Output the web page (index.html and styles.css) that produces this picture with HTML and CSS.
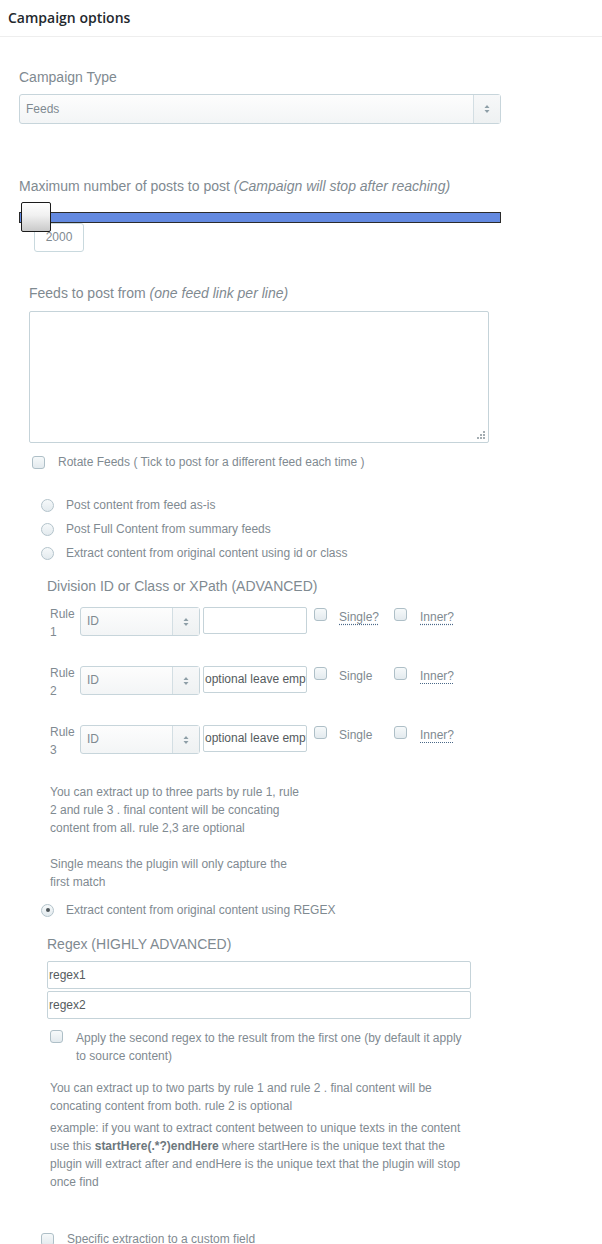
FILE: index.html
```html
<!DOCTYPE html>
<html>
<head>
<meta charset="utf-8">
<title>Campaign options</title>
<link rel="stylesheet" href="styles.css">
</head>
<body>
<div class="box">
  <h2 class="box-title">Campaign options</h2>
  <div class="box-body">
    <div class="field-label lbl-type">Campaign Type</div>
    <div class="select select-main">
      <span class="select-text">Feeds</span>
      <span class="select-arrow"><svg width="6" height="10" viewBox="0 0 6 10"><polygon points="0.5,4 3,1 5.5,4" fill="#8d9ea7"/><polygon points="0.5,6 5.5,6 3,9" fill="#8d9ea7"/></svg></span>
    </div>

    <div class="field-label lbl-max">Maximum number of posts to post <em>(Campaign will stop after reaching)</em></div>
    <div class="slider">
      <div class="slider-track"></div>
      <div class="slider-tip">2000</div>
      <div class="slider-handle"></div>
    </div>

    <div class="feeds">
      <div class="field-label">Feeds to post from <em>(one feed link per line)</em></div>
      <div class="textarea">
        <svg class="grip" width="9" height="9" viewBox="0 0 9 9"><rect x="6" y="0" width="2" height="2" fill="#a4adb2"/><rect x="3" y="3" width="2" height="2" fill="#a4adb2"/><rect x="6" y="3" width="2" height="2" fill="#a4adb2"/><rect x="0" y="6" width="2" height="2" fill="#a4adb2"/><rect x="3" y="6" width="2" height="2" fill="#a4adb2"/><rect x="6" y="6" width="2" height="2" fill="#a4adb2"/></svg>
      </div>
      <div class="check-row rotate"><span class="cb"></span><span>Rotate Feeds ( Tick to post for a different feed each time )</span></div>
    </div>

    <div class="radios radios-top">
      <div class="radio-row"><span class="rb"></span><span>Post content from feed as-is</span></div>
      <div class="radio-row"><span class="rb"></span><span>Post Full Content from summary feeds</span></div>
      <div class="radio-row"><span class="rb"></span><span>Extract content from original content using id or class</span></div>
    </div>

    <div class="advanced">
      <div class="field-label lbl-div">Division ID or Class or XPath (ADVANCED)</div>
      <div class="rules">
        <div class="rule-row">
          <span class="rule-label">Rule 1</span>
          <div class="select select-rule"><span class="select-text">ID</span><span class="select-arrow"><svg width="6" height="10" viewBox="0 0 6 10"><polygon points="0.5,4 3,1 5.5,4" fill="#8d9ea7"/><polygon points="0.5,6 5.5,6 3,9" fill="#8d9ea7"/></svg></span></div>
          <div class="input input-rule"></div>
          <span class="cb cb-rule"></span>
          <span class="opt-label"><span class="abbr">Single?</span></span>
          <span class="cb cb-rule cb-second"></span>
          <span class="opt-label opt-inner"><span class="abbr">Inner?</span></span>
        </div>
        <div class="rule-row">
          <span class="rule-label">Rule 2</span>
          <div class="select select-rule"><span class="select-text">ID</span><span class="select-arrow"><svg width="6" height="10" viewBox="0 0 6 10"><polygon points="0.5,4 3,1 5.5,4" fill="#8d9ea7"/><polygon points="0.5,6 5.5,6 3,9" fill="#8d9ea7"/></svg></span></div>
          <div class="input input-rule">optional leave empty</div>
          <span class="cb cb-rule"></span>
          <span class="opt-label">Single</span>
          <span class="cb cb-rule cb-second"></span>
          <span class="opt-label opt-inner"><span class="abbr">Inner?</span></span>
        </div>
        <div class="rule-row">
          <span class="rule-label">Rule 3</span>
          <div class="select select-rule"><span class="select-text">ID</span><span class="select-arrow"><svg width="6" height="10" viewBox="0 0 6 10"><polygon points="0.5,4 3,1 5.5,4" fill="#8d9ea7"/><polygon points="0.5,6 5.5,6 3,9" fill="#8d9ea7"/></svg></span></div>
          <div class="input input-rule">optional leave empty</div>
          <span class="cb cb-rule"></span>
          <span class="opt-label">Single</span>
          <span class="cb cb-rule cb-second"></span>
          <span class="opt-label opt-inner"><span class="abbr">Inner?</span></span>
        </div>
      </div>
      <p class="help help-rules">You can extract up to three parts by rule 1, rule 2 and rule 3 . final content will be concating content from all. rule 2,3 are optional<br><br>Single means the plugin will only capture the first match</p>
    </div>

    <div class="radios radios-regex">
      <div class="radio-row"><span class="rb rb-on"></span><span>Extract content from original content using REGEX</span></div>
    </div>

    <div class="regex">
      <div class="field-label lbl-regex">Regex (HIGHLY ADVANCED)</div>
      <div class="input input-regex first">regex1</div>
      <div class="input input-regex">regex2</div>
      <div class="check-row regex-check"><span class="cb"></span><span>Apply the second regex to the result from the first one (by default it apply to source content)</span></div>
      <p class="help help-regex">You can extract up to two parts by rule 1 and rule 2 . final content will be concating content from both. rule 2 is optional</p>
      <p class="help help-example">example: if you want to extract content between to unique texts in the content use this <strong>startHere(.*?)endHere</strong> where startHere is the unique text that the plugin will extract after and endHere is the unique text that the plugin will stop once find</p>
    </div>

    <div class="check-row custom-field"><span class="cb"></span><span>Specific extraction to a custom field</span></div>
  </div>
</div>
</body>
</html>
```

FILE: styles.css
```css
* { box-sizing: border-box; }

body {
  margin: 0;
  background: #fff;
  font-family: "Liberation Sans", Arial, sans-serif;
  font-size: 12px;
  color: #7f8a91;
}

.box-title {
  margin: 0;
  height: 37px;
  line-height: 36px;
  padding-left: 8px;
  border-bottom: 1px solid #eeeeee;
  font-family: "Open Sans", "Liberation Sans", sans-serif;
  font-weight: 600;
  font-size: 14px;
  color: #23282d;
}

.box-body {
  padding-left: 19px;
  padding-bottom: 40px;
}

.field-label {
  font-size: 14px;
  line-height: 20px;
  color: #7f8a91;
}

.field-label em { font-style: italic; }

.lbl-type { margin-top: 30px; }

/* select */
.select {
  display: flex;
  border: 1px solid #c7d5db;
  border-radius: 3px;
  background: linear-gradient(#fdfdfd, #f3f5f6);
}

.select-text {
  flex: 1;
  padding-left: 6px;
  color: #7f8a91;
  font-size: 12px;
}

.select-arrow {
  width: 27px;
  border-left: 1px solid #d3dee3;
  display: flex;
  align-items: center;
  justify-content: center;
  background: linear-gradient(#f7f8f9, #eef1f2);
}

.select-main {
  margin-top: 7px;
  width: 482px;
  height: 30px;
  line-height: 28px;
}

/* slider */
.lbl-max { margin-top: 52px; }

.slider {
  position: relative;
  margin-top: 6px;
  padding-top: 10px;
  width: 482px;
  height: 30px;
}

.slider-track {
  height: 11px;
  border: 1px solid #2b2b2b;
  background: #6389e0;
}

.slider-handle {
  position: absolute;
  left: 2px;
  top: 0;
  width: 30px;
  height: 30px;
  border: 1px solid #1c1c1c;
  border-radius: 2px;
  background: linear-gradient(#ffffff, #f0f0f0 45%, #c9c9c9);
}

.slider-tip {
  position: absolute;
  left: 15px;
  top: 21px;
  width: 50px;
  height: 29px;
  border: 1px solid #c9d9de;
  border-radius: 3px;
  background: #fff;
  text-align: center;
  line-height: 27px;
  font-size: 12px;
  color: #7f8a91;
}

/* feeds */
.feeds {
  margin-top: 51px;
  margin-left: 10px;
}

.textarea {
  position: relative;
  margin-top: 8px;
  width: 460px;
  height: 132px;
  border: 1px solid #c5d3d9;
  border-radius: 2px;
  background: #fff;
}

.grip {
  position: absolute;
  right: 2px;
  bottom: 2px;
}

.check-row {
  display: flex;
  align-items: center;
  line-height: 18px;
  font-size: 12px;
}

.cb {
  flex-shrink: 0;
  display: inline-block;
  width: 13px;
  height: 13px;
  border: 1px solid #aebfc7;
  border-radius: 3px;
  background: linear-gradient(#f6f9fa, #e3eaee);
}

.check-row .cb { margin-right: 13px; }

.rotate {
  margin-top: 10px;
  margin-left: 3px;
}

/* radios */
.radios { margin-left: 22px; }
.radios-top { margin-top: 22px; }

.radio-row {
  display: flex;
  align-items: center;
  height: 24px;
  font-size: 12px;
}

.rb {
  flex-shrink: 0;
  display: inline-flex;
  align-items: center;
  justify-content: center;
  width: 13px;
  height: 13px;
  margin-right: 12px;
  border: 1px solid #b3c3cb;
  border-radius: 50%;
  background: linear-gradient(#f6f9fa, #e3eaee);
}

.rb-on::after {
  content: "";
  width: 4px;
  height: 4px;
  border-radius: 50%;
  background: #4d5559;
}

/* advanced */
.advanced { margin-left: 28px; }

.lbl-div { margin-top: 11px; }

.rules {
  margin-top: 9px;
  margin-left: 3px;
}

.rule-row {
  display: flex;
  align-items: flex-start;
  height: 36px;
  margin-bottom: 23px;
}

.rule-row:last-child { margin-bottom: 0; }

.rule-label {
  width: 30px;
  flex-shrink: 0;
  line-height: 18px;
  font-size: 12px;
}

.select-rule {
  margin-top: 2px;
  width: 120px;
  height: 29px;
  line-height: 27px;
}

.input {
  border: 1px solid #c5d3d9;
  border-radius: 2px;
  background: #fff;
  color: #555b5e;
  font-size: 12px;
  white-space: nowrap;
  overflow: hidden;
}

.input-rule {
  margin-top: 2px;
  margin-left: 3px;
  width: 104px;
  height: 27px;
  line-height: 25px;
  padding-left: 1px;
}

.cb-rule {
  margin-top: 3px;
  margin-left: 7px;
}

.cb-rule.cb-second { margin-left: 0; }

.opt-label {
  width: 55px;
  margin-left: 12px;
  margin-top: 3px;
  line-height: 18px;
  font-size: 12px;
}

.opt-label.opt-inner {
  width: auto;
  margin-left: 13px;
}

.abbr {
  text-decoration: underline dotted #4a6888;
  text-underline-offset: 3px;
}

.help {
  margin: 0;
  font-size: 12px;
  line-height: 18px;
  color: #7f8a91;
}

.help-rules {
  margin-top: 24px;
  margin-left: 3px;
  width: 255px;
}

/* regex */
.radios-regex { margin-top: 7px; }

.regex {
  margin-left: 28px;
  width: 424px;
}

.lbl-regex { margin-top: 12px; }

.input-regex {
  margin-top: 2px;
  height: 28px;
  line-height: 26px;
  padding-left: 1px;
}

.input-regex.first { margin-top: 7px; }

.regex-check {
  margin-top: 10px;
  margin-left: 3px;
  align-items: flex-start;
}

.regex-check .cb { margin-top: 1px; }

.help-regex {
  margin-top: 14px;
  margin-left: 3px;
}

.help-example {
  margin-top: 4px;
  margin-left: 3px;
}

.help strong {
  font-weight: bold;
  color: #6c777d;
}

.custom-field {
  margin-top: 39px;
  margin-left: 22px;
}
```
